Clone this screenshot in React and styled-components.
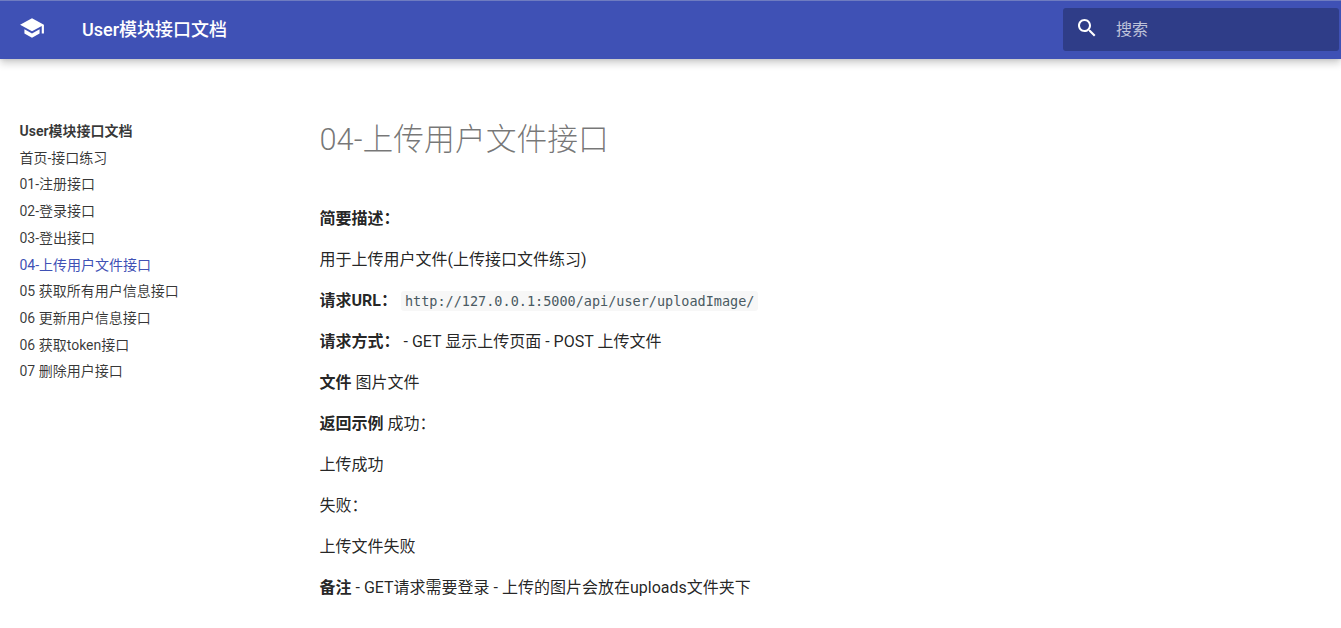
import React from 'react'
import styled, { createGlobalStyle } from 'styled-components'

const GlobalStyle = createGlobalStyle`
  html, body {
    margin: 0;
    padding: 0;
    background: #fff;
    font-family: Roboto, "Noto Sans CJK SC", sans-serif;
    color: rgba(0, 0, 0, 0.87);
  }
`

const Header = styled.header`
  height: 59px;
  padding-bottom: 2px;
  box-sizing: border-box;
  border-top: 1px solid #6f7cc0;
  background-color: #3f51b5;
  box-shadow: 0 0 4px rgba(0, 0, 0, 0.1), 0 4px 8px rgba(0, 0, 0, 0.2);
  display: flex;
  align-items: center;
  color: #fff;
`

const Logo = styled.svg`
  width: 26px;
  height: 26px;
  margin-left: 19px;
  margin-top: -3px;
  fill: #fff;
`

const Title = styled.div`
  margin-left: 37px;
  margin-top: -2px;
  font-size: 18px;
  font-weight: 500;
  flex: 1;
`

const Search = styled.div`
  width: 276px;
  height: 43px;
  margin-right: 2px;
  padding-left: 12px;
  box-sizing: border-box;
  border-radius: 3px;
  background-color: #2f3d88;
  display: flex;
  align-items: center;
`

const SearchIcon = styled.svg`
  width: 24px;
  height: 24px;
  fill: #fff;
  margin-top: -3px;
`

const SearchText = styled.span`
  margin-left: 17px;
  margin-top: -3px;
  font-size: 16px;
  color: rgba(255, 255, 255, 0.7);
`

const Main = styled.main`
  display: flex;
  padding-top: 59px;
`

const Sidebar = styled.nav`
  width: 319.5px;
  padding-left: 19.5px;
  box-sizing: border-box;
  flex-shrink: 0;
`

const NavItem = styled.div`
  height: 26.72px;
  line-height: 26.72px;
  font-size: 14px;
  font-weight: ${(p) => (p.$head ? 700 : 400)};
  color: ${(p) => (p.$active ? '#3f51b5' : 'rgba(0, 0, 0, 0.78)')};
`

const Content = styled.article`
  flex: 1;
  font-size: 16px;
`

const Heading = styled.h1`
  margin: 0 0 44px;
  font-size: 30.8px;
  line-height: 44px;
  font-weight: 300;
  color: rgba(0, 0, 0, 0.54);
`

const Para = styled.p`
  margin: 0 0 16px;
  line-height: 25px;
  font-size: 16px;
`

const Code = styled.code`
  margin-left: 4px;
  padding: 2px 4px;
  font-family: "DejaVu Sans Mono", monospace;
  font-size: 13.5px;
  line-height: 1;
  color: #4a5a62;
  background-color: rgba(236, 236, 236, 0.4);
  border-radius: 3px;
`

const navItems = [
  '首页-接口练习',
  '01-注册接口',
  '02-登录接口',
  '03-登出接口',
  '04-上传用户文件接口',
  '05 获取所有用户信息接口',
  '06 更新用户信息接口',
  '06 获取token接口',
  '07 删除用户接口',
]

export default function App() {
  return (
    <>
      <GlobalStyle />
      <Header>
        <Logo viewBox="0 0 24 24">
          <path d="M5 13.18v4L12 21l7-3.82v-4L12 17l-7-3.82zM12 3L1 9l11 6 9-4.91V17h2V9L12 3z" />
        </Logo>
        <Title>User模块接口文档</Title>
        <Search>
          <SearchIcon viewBox="0 0 24 24">
            <path d="M15.5 14h-.79l-.28-.27C15.41 12.59 16 11.11 16 9.5 16 5.91 13.09 3 9.5 3S3 5.91 3 9.5 5.91 16 9.5 16c1.61 0 3.09-.59 4.23-1.57l.27.28v.79l5 4.99L20.49 19l-4.99-5zm-6 0C7.01 14 5 11.99 5 9.5S7.01 5 9.5 5 14 7.01 14 9.5 11.99 14 9.5 14z" />
          </SearchIcon>
          <SearchText>搜索</SearchText>
        </Search>
      </Header>
      <Main>
        <Sidebar>
          <NavItem $head>User模块接口文档</NavItem>
          {navItems.map((item, i) => (
            <NavItem key={i} $active={i === 4}>{item}</NavItem>
          ))}
        </Sidebar>
        <Content>
          <Heading>04-上传用户文件接口</Heading>
          <Para><b>简要描述：</b></Para>
          <Para>用于上传用户文件(上传接口文件练习)</Para>
          <Para><b>请求URL：</b><Code>http://127.0.0.1:5000/api/user/uploadImage/</Code></Para>
          <Para><b>请求方式：</b> - GET 显示上传页面 - POST 上传文件</Para>
          <Para><b>文件</b> 图片文件</Para>
          <Para><b>返回示例</b> 成功：</Para>
          <Para>上传成功</Para>
          <Para>失败：</Para>
          <Para>上传文件失败</Para>
          <Para><b>备注</b> - GET请求需要登录 - 上传的图片会放在uploads文件夹下</Para>
        </Content>
      </Main>
    </>
  )
}
